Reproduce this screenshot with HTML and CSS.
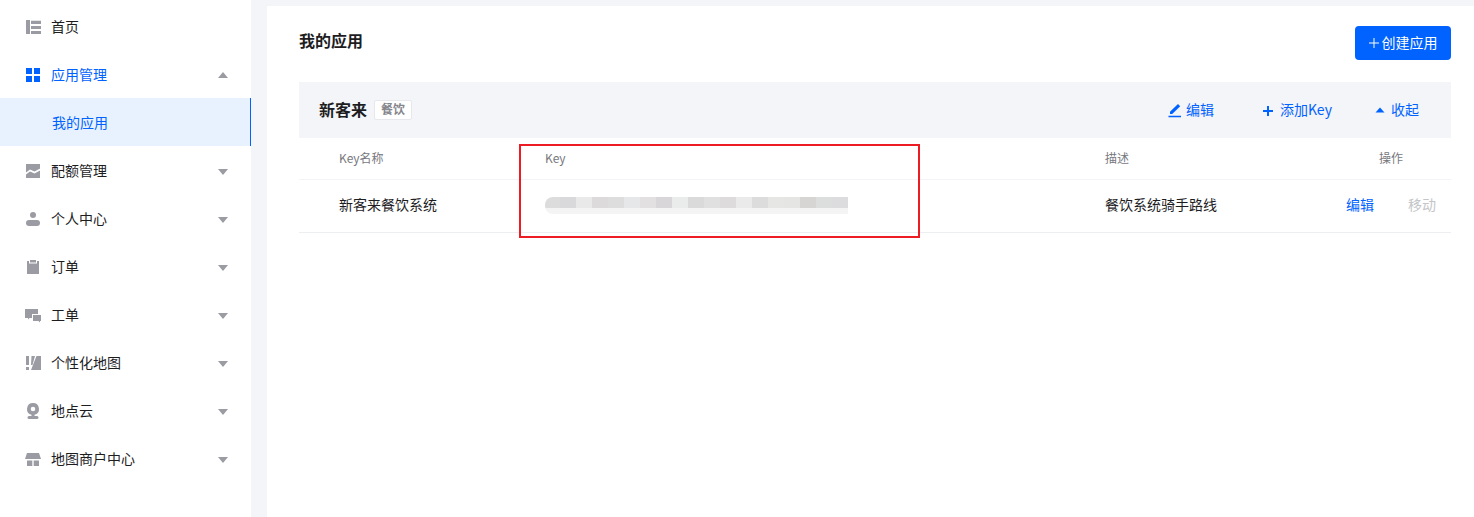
FILE: index.html
```html
<!DOCTYPE html>
<html lang="zh-CN">

<head>
  <meta charset="UTF-8">
  <meta name="viewport" content="width=device-width, initial-scale=1.0">
  <title>我的应用</title>
  <link rel="stylesheet" href="styles.css">
</head>

<body>
  <aside class="sidebar">
    <a class="nav-item">
      <svg class="nav-icon" viewBox="0 0 16 16"><path d="M1 1h4v14H1zM6 1.700h10V5H6zM6 7h10v3H6zM6 12h10v3H6z"/></svg>
      <span class="nav-label">首页</span>
    </a>
    <a class="nav-item is-open">
      <svg class="nav-icon" viewBox="0 0 16 16"><path d="M1 1h6v6H1zM9 1h6v6H9zM1 9h6v6H1zM9 9h6v6H9z"/></svg>
      <span class="nav-label">应用管理</span>
      <i class="caret caret-up"></i>
    </a>
    <a class="nav-sub">我的应用</a>
    <a class="nav-item">
      <svg class="nav-icon" viewBox="0 0 16 16"><path fill-rule="evenodd" d="M1 1h14v14H1zM1 9.500L5 6.500l4.500 2L15 5.500v2l-5.500 3-4.500-2-4 3z"/></svg>
      <span class="nav-label">配额管理</span>
      <i class="caret"></i>
    </a>
    <a class="nav-item">
      <svg class="nav-icon" viewBox="0 0 16 16"><circle cx="8" cy="4" r="3"/><rect x="1" y="9" width="14" height="6" rx="3"/></svg>
      <span class="nav-label">个人中心</span>
      <i class="caret"></i>
    </a>
    <a class="nav-item">
      <svg class="nav-icon" viewBox="0 0 16 16"><path d="M2 2h2v2.500h8V2h2v13H2zM5 1h6v2.500H5z"/></svg>
      <span class="nav-label">订单</span>
      <i class="caret"></i>
    </a>
    <a class="nav-item">
      <svg class="nav-icon" viewBox="0 0 16 16"><path d="M0 2h13v5H7v4H4.500L3 12.500V11H0zM8 8h8v6h-1v1.500L13.500 14H8z"/></svg>
      <span class="nav-label">工单</span>
      <i class="caret"></i>
    </a>
    <a class="nav-item">
      <svg class="nav-icon" viewBox="0 0 16 16"><path d="M1 1h3v9H1zM1 12h3v3H1zM6.500 1H10L7.500 10H6zM11.500 1H16v14H6z"/></svg>
      <span class="nav-label">个性化地图</span>
      <i class="caret"></i>
    </a>
    <a class="nav-item">
      <svg class="nav-icon" viewBox="0 0 16 16"><path fill-rule="evenodd" d="M8 0a6 6 0 0 1 1.500 11.800V13H12a1.500 1.500 0 0 1 0 3H4a1.500 1.500 0 0 1 0-3h2.500v-1.200A6 6 0 0 1 8 0zm0 3.700a2.300 2.300 0 1 0 0 4.600 2.300 2.300 0 0 0 0-4.600z"/></svg>
      <span class="nav-label">地点云</span>
      <i class="caret"></i>
    </a>
    <a class="nav-item">
      <svg class="nav-icon" viewBox="0 0 16 16"><path d="M2 2h12l2 6H0zM2 9.500h5.300V15H2zM8.700 9.500H14V15H8.700z"/></svg>
      <span class="nav-label">地图商户中心</span>
      <i class="caret"></i>
    </a>
  </aside>

  <main class="content">
    <header class="page-head">
      <h1 class="page-title">我的应用</h1>
      <button class="create-btn">
        <svg class="create-plus" viewBox="0 0 10 10"><path d="M4.500 0h1v4.500H10v1H5.500V10h-1V5.500H0v-1h4.500z"/></svg>
        创建应用
      </button>
    </header>

    <section class="app">
      <div class="app-head">
        <h2 class="app-name">新客来</h2>
        <span class="app-tag">餐饮</span>
        <div class="app-actions">
          <a class="action">
            <svg class="action-icon" viewBox="0 0 16 16"><path d="M3 12V9.800L11 2l2.200 2.200L5.200 12zM1.500 13.800H14v1.400H1.500z"/></svg>
            编辑
          </a>
          <a class="action">
            <svg class="action-icon" viewBox="0 0 16 16"><path d="M6 4h2v4h4v2H8v4H6v-4H2V8h4z"/></svg>
            添加Key
          </a>
          <a class="action action-last">
            <svg class="action-icon" viewBox="0 0 16 16"><path d="M8 5.500L12.500 10.500H3.500z"/></svg>
            收起
          </a>
        </div>
      </div>

      <div class="key-table">
        <div class="key-row key-row-head">
          <span class="col-name">Key名称</span>
          <span>Key</span>
          <span>描述</span>
          <span class="col-ops">操作</span>
        </div>
        <div class="key-row">
          <span class="col-name">新客来餐饮系统</span>
          <span><i class="key-blur"></i></span>
          <span>餐饮系统骑手路线</span>
          <span class="col-ops">
            <a class="op">编辑</a>
            <a class="op op-disabled">移动</a>
          </span>
        </div>
        <div class="highlight-box"></div>
      </div>
    </section>
  </main>
</body>

</html>
```

FILE: styles.css
```css
html {
  box-sizing: border-box;
  font-family: "Noto Sans CJK SC", "Liberation Sans", sans-serif;
  font-size: 14px;
}

*,
*:after,
*:before {
  box-sizing: inherit;
}

body {
  margin: 0;
  height: 517px;
  display: flex;
  overflow: hidden;
  color: #1d1d1f;
  background-color: #f3f5f9;
}

.sidebar {
  flex: none;
  width: 251px;
  padding-top: 3px;
  background-color: #fff;
}

.nav-item {
  display: flex;
  align-items: center;
  height: 48px;
  padding: 0 23px 0 25px;
}

.nav-item.is-open {
  color: #0062ff;
}

.nav-icon {
  flex: none;
  width: 16px;
  height: 16px;
  margin-right: 10px;
  fill: #9a9ba3;
}

.is-open .nav-icon {
  fill: #0062ff;
}

.nav-label {
  flex: 1;
  padding-bottom: 2px;
}

.caret {
  width: 0;
  height: 0;
  margin-top: 2px;
  border-left: 5px solid transparent;
  border-right: 5px solid transparent;
  border-top: 6px solid #9a9ba3;
}

.caret-up {
  margin-top: 0;
  border-top: 0;
  border-bottom: 6px solid #9a9ba3;
}

.nav-sub {
  display: flex;
  align-items: center;
  height: 48px;
  margin-top: -1px;
  margin-bottom: 1px;
  padding-left: 52px;
  color: #0062ff;
  background-color: #e8f2fe;
  border-right: 1px solid #0062ff;
}

.content {
  flex: 1;
  margin: 6px 0 0 16px;
  padding: 20px 23px 0 32px;
  background-color: #fff;
}

.page-head {
  display: flex;
  justify-content: space-between;
  align-items: flex-start;
  height: 56px;
}

.page-title {
  margin: 0;
  font-size: 16px;
  line-height: 28px;
  font-weight: 700;
}

.create-btn {
  display: flex;
  align-items: center;
  justify-content: center;
  gap: 3px;
  width: 96px;
  height: 34px;
  padding: 0 0 2px;
  border: 0;
  border-radius: 4px;
  color: #fff;
  background-color: #0062ff;
  font: inherit;
}

.create-plus {
  width: 10px;
  height: 10px;
  margin-top: 2px;
  fill: #fff;
}

.app-head {
  display: flex;
  align-items: center;
  height: 56px;
  padding: 0 32px 0 20px;
  background-color: #f3f5f9;
}

.app-name {
  margin: 0;
  padding-bottom: 2px;
  font-size: 16px;
  font-weight: 700;
}

.app-tag {
  margin-left: 7px;
  width: 38px;
  height: 20px;
  border: 1px solid #e6e8ec;
  border-radius: 2px;
  color: #85868c;
  background-color: #fff;
  font-size: 12px;
  line-height: 16px;
  font-weight: 700;
  text-align: center;
}

.app-actions {
  display: flex;
  margin-left: auto;
  gap: 47px;
}

.action {
  display: flex;
  align-items: center;
  gap: 3px;
  padding-bottom: 2px;
  color: #0062ff;
}

.action-last {
  margin-left: -7px;
}

.action-icon {
  width: 16px;
  height: 16px;
  margin-top: 2px;
  fill: #0062ff;
}

.key-table {
  position: relative;
}

.key-row {
  display: grid;
  grid-template-columns: 246px 560px 1fr 105px;
  align-items: center;
  height: 53px;
  padding-bottom: 4px;
  border-bottom: 1px solid #eceef2;
}

.key-row-head {
  height: 42px;
  padding-bottom: 2px;
  color: #77787e;
  font-size: 12px;
  border-bottom-color: #f3f4f7;
}

.col-name {
  padding-left: 40px;
}

.col-ops {
  display: flex;
  justify-content: center;
  gap: 34px;
  padding-right: 15px;
}

.op {
  color: #0062ff;
}

.op-disabled {
  color: #c4c5c9;
}

.key-blur {
  display: block;
  width: 303px;
  height: 17px;
  margin-top: 3px;
  border-radius: 8px 0 0 8px;
  background-image:
    linear-gradient(to right,
      #dcdcdc 0 15px, #d9d8da 15px 31px, #e9e9e9 31px 47px, #dcdadb 47px 63px,
      #dedddd 63px 79px, #e6e7e9 79px 95px, #e2e0e1 95px 111px, #d8d6d9 111px 127px,
      #eaecec 127px 143px, #dadada 143px 159px, #e0e0e0 159px 175px, #dddbdc 175px 191px,
      #eaeaea 191px 207px, #dcdcdc 207px 223px, #e6e6e4 223px 239px, #e5e5e4 239px 255px,
      #d6d5d4 255px 271px, #dcdddd 271px 287px, #dcdcde 287px 303px),
    linear-gradient(#f4f4f5, #f4f4f5);
  background-size: 100% 11px, 100% 100%;
  background-repeat: no-repeat;
}

.highlight-box {
  position: absolute;
  left: 220px;
  top: 6px;
  width: 401px;
  height: 94px;
  border: 2px solid #ed1c24;
  pointer-events: none;
}
```
